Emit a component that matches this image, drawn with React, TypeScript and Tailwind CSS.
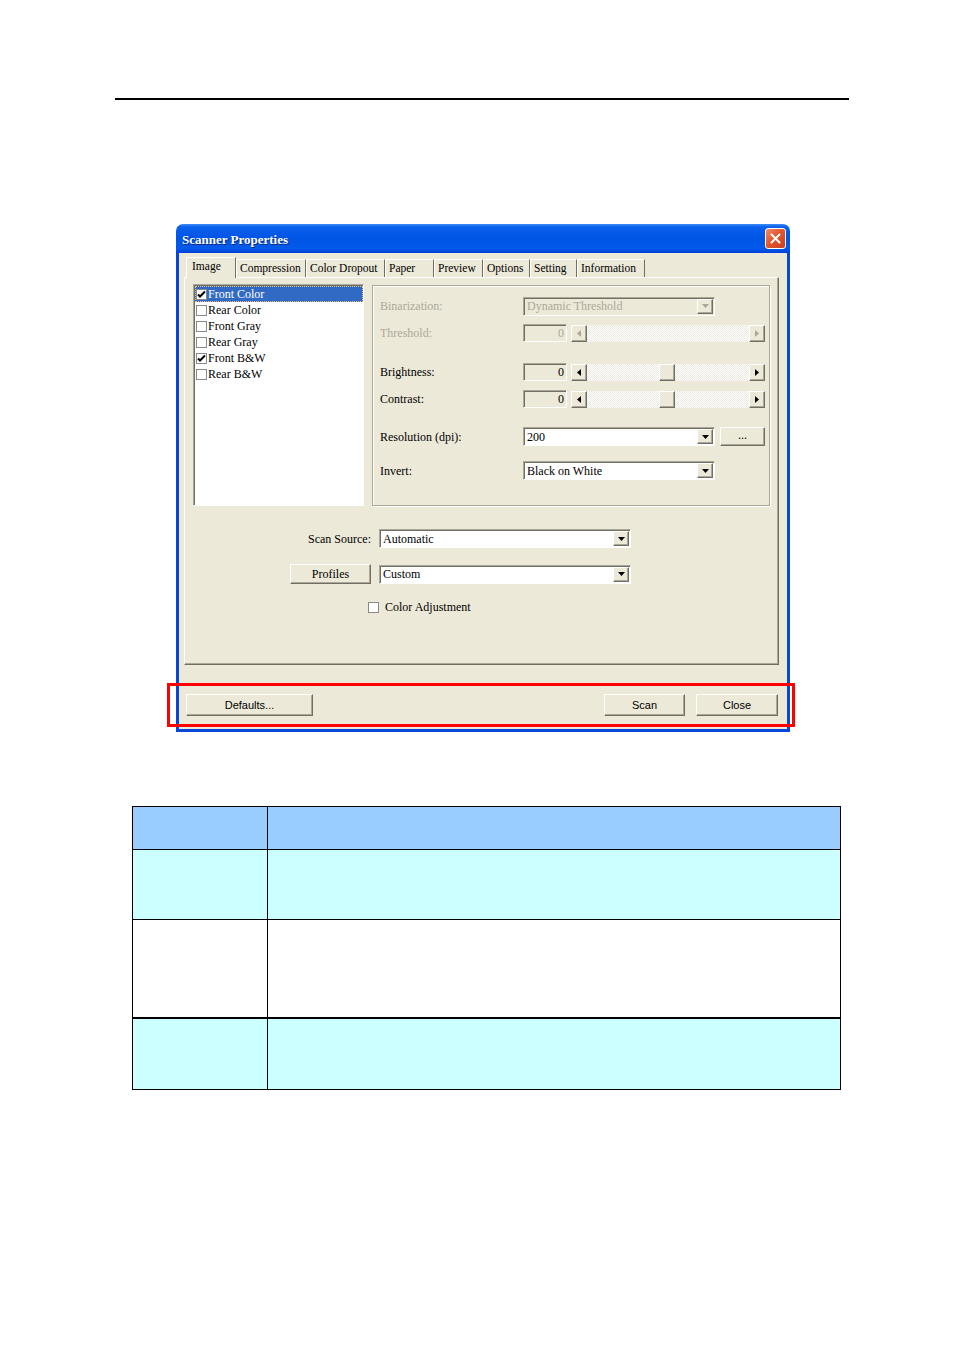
import React from 'react';

const raised =
  'border border-t-white border-l-white border-r-[#716F64] border-b-[#716F64] shadow-[inset_-1px_-1px_0_#ACA899]';
const sunken =
  'border border-t-[#ACA899] border-l-[#ACA899] border-r-white border-b-white shadow-[inset_1px_1px_0_#716F64]';

function Tri({ dir, disabled }: { dir: 'down' | 'left' | 'right'; disabled?: boolean }) {
  const fill = disabled ? '#ACA899' : '#000';
  if (dir === 'down')
    return (
      <svg width="7" height="4" viewBox="0 0 7 4">
        <path d="M0 0h7L3.5 4z" fill={fill} />
      </svg>
    );
  if (dir === 'left')
    return (
      <svg width="4" height="7" viewBox="0 0 4 7">
        <path d="M4 0v7L0 3.5z" fill={fill} />
      </svg>
    );
  return (
    <svg width="4" height="7" viewBox="0 0 4 7">
      <path d="M0 0v7L4 3.5z" fill={fill} />
    </svg>
  );
}

function Combo({ w, value, disabled }: { w: string; value: string; disabled?: boolean }) {
  return (
    <div className={`flex h-[19px] items-center ${w} ${sunken} ${disabled ? 'bg-[#ECE9D8] text-[#ACA899]' : 'bg-white text-black'}`}>
      <span className="flex-1 pl-[3px] leading-none whitespace-nowrap">{value}</span>
      <span className={`mr-[1px] flex h-[15px] w-[16px] items-center justify-center bg-[#ECE9D8] ${raised}`}>
        <Tri dir="down" disabled={disabled} />
      </span>
    </div>
  );
}

function Slider({ disabled, thumb }: { disabled?: boolean; thumb?: boolean }) {
  return (
    <div className="flex h-[17px] w-[194px]">
      <span className={`flex h-full w-[16px] items-center justify-center bg-[#ECE9D8] ${raised}`}>
        <Tri dir="left" disabled={disabled} />
      </span>
      <div className="relative h-full flex-1 bg-[repeating-conic-gradient(#ffffff_0%_25%,#ebe9df_0%_50%)] bg-size-[2px_2px]">
        {thumb && <span className={`absolute top-0 left-[72px] h-full w-[16px] bg-[#ECE9D8] ${raised}`} />}
      </div>
      <span className={`flex h-full w-[16px] items-center justify-center bg-[#ECE9D8] ${raised}`}>
        <Tri dir="right" disabled={disabled} />
      </span>
    </div>
  );
}

function NumBox({ disabled }: { disabled?: boolean }) {
  return (
    <div className={`flex h-[18px] w-[44px] items-center justify-end pr-[2px] bg-[#ECE9D8] ${sunken} ${disabled ? 'text-[#ACA899]' : 'text-black'}`}>
      0
    </div>
  );
}

function Check({ checked }: { checked?: boolean }) {
  return (
    <span className="flex h-[11px] w-[11px] shrink-0 items-center justify-center border border-[#8A8A8A] bg-white">
      {checked && (
        <svg width="9" height="9" viewBox="0 0 9 9">
          <path d="M1 4.5l2 2 5-5" stroke="#000" strokeWidth="2" fill="none" />
        </svg>
      )}
    </span>
  );
}

const tabs = [
  { label: 'Compression', w: 'w-[70px]' },
  { label: 'Color Dropout', w: 'w-[79px]' },
  { label: 'Paper', w: 'w-[49px]' },
  { label: 'Preview', w: 'w-[49px]' },
  { label: 'Options', w: 'w-[47px]' },
  { label: 'Setting', w: 'w-[47px]' },
  { label: 'Information', w: 'w-[68px]' },
];

const items = [
  { label: 'Front Color', checked: true, selected: true },
  { label: 'Rear Color' },
  { label: 'Front Gray' },
  { label: 'Rear Gray' },
  { label: 'Front B&W', checked: true },
  { label: 'Rear B&W' },
];

function Label({ children, disabled }: { children: React.ReactNode; disabled?: boolean }) {
  return <span className={`w-[150px] shrink-0 pl-[7px] ${disabled ? 'text-[#ACA899]' : 'text-black'}`}>{children}</span>;
}

export default function App() {
  return (
    <div className="min-h-[1352px] w-[954px] bg-white font-['Liberation_Serif',serif] text-[12px]">
      <div className="pt-[98px] pl-[115px]">
        <div className="h-[2px] w-[734px] bg-black" />
      </div>

      {/* dialog */}
      <div className="relative mt-[124px] ml-[176px] w-[614px]">
        <div className="flex h-[29px] items-center justify-between rounded-t-[7px] bg-[linear-gradient(180deg,#3D8DF8_0%,#0A60EB_10%,#0055E5_50%,#0259EA_85%,#0040D8_100%)] pr-[4px] pl-[6px]">
          <span className="pt-[3px] font-bold text-[13px] text-white [text-shadow:1px_1px_0_#0A2A7A]">Scanner Properties</span>
          <span className="flex h-[21px] w-[21px] items-center justify-center rounded-[3px] border border-white bg-[linear-gradient(135deg,#F08C6A_0%,#E2572F_45%,#C8401C_100%)]">
            <svg width="11" height="11" viewBox="0 0 11 11">
              <path d="M1.5 1.5l8 8M9.5 1.5l-8 8" stroke="#fff" strokeWidth="2" strokeLinecap="round" />
            </svg>
          </span>
        </div>

        <div className="h-[479px] border-x-[3px] border-b-[3px] border-[#0748D8] bg-[#ECE9D8] pt-[4px] pl-[5px]">
          {/* tabs */}
          <div className="ml-[2px] flex h-[20px] items-end text-[11.5px]">
            <div className="relative z-10 -mb-[1px] flex h-[21px] w-[50px] items-start border-t border-l border-r border-t-white border-l-white border-r-[#716F64] bg-[#ECE9D8] pl-[5px]">
              Image
            </div>
            {tabs.map((t) => (
              <div
                key={t.label}
                className={`flex h-[18px] ${t.w} items-center overflow-hidden border-t border-l border-r border-t-white border-l-white border-r-[#716F64] pl-[3px] whitespace-nowrap`}
              >
                {t.label}
              </div>
            ))}
          </div>

          {/* panel */}
          <div className="h-[388px] w-[595px] border border-t-white border-l-white border-r-[#716F64] border-b-[#716F64] shadow-[inset_-1px_-1px_0_#ACA899]">
            <div className="flex gap-[8px] pt-[6px] pl-[8px]">
              <div className={`h-[222px] w-[171px] bg-white ${sunken} pt-[1px] pl-[1px]`}>
                {items.map((it) => (
                  <div
                    key={it.label}
                    className={`flex h-[16px] items-center gap-[1px] pl-[1px] ${it.selected ? 'bg-[#316AC5] text-white outline-1 outline-dotted outline-offset-[-1px] outline-[#F0C080]' : 'text-black'}`}
                  >
                    <Check checked={it.checked} />
                    <span className="leading-none">{it.label}</span>
                  </div>
                ))}
              </div>

              <div className="mt-[1px] h-[221px] w-[398px] border border-[#ACA899] shadow-[inset_1px_1px_0_#fff,1px_1px_0_#fff]">
                <div className="mt-[11px] flex h-[18px] items-center">
                  <Label disabled>Binarization:</Label>
                  <Combo w="w-[192px]" value="Dynamic Threshold" disabled />
                </div>
                <div className="mt-[9px] flex h-[18px] items-center gap-[4px]">
                  <Label disabled>Threshold:</Label>
                  <span className="-ml-[4px]"><NumBox disabled /></span>
                  <Slider disabled />
                </div>
                <div className="mt-[21px] flex h-[18px] items-center gap-[4px]">
                  <Label>Brightness:</Label>
                  <span className="-ml-[4px]"><NumBox /></span>
                  <Slider thumb />
                </div>
                <div className="mt-[9px] flex h-[18px] items-center gap-[4px]">
                  <Label>Contrast:</Label>
                  <span className="-ml-[4px]"><NumBox /></span>
                  <Slider thumb />
                </div>
                <div className="mt-[19px] flex h-[19px] items-center">
                  <Label>Resolution (dpi):</Label>
                  <Combo w="w-[192px]" value="200" />
                  <span className={`ml-[5px] flex h-[19px] w-[45px] items-center justify-center bg-[#ECE9D8] pb-[3px] ${raised}`}>...</span>
                </div>
                <div className="mt-[15px] flex h-[19px] items-center">
                  <Label>Invert:</Label>
                  <Combo w="w-[192px]" value="Black on White" />
                </div>
              </div>
            </div>

            {/* lower section */}
            <div className="mt-[23px] flex h-[19px] items-center">
              <span className="w-[194px] pr-[8px] text-right">Scan Source:</span>
              <Combo w="w-[252px]" value="Automatic" />
            </div>
            <div className="mt-[16px] flex h-[20px] items-center">
              <span className={`ml-[105px] flex h-[20px] w-[81px] items-center justify-center bg-[#ECE9D8] ${raised}`}>Profiles</span>
              <span className="ml-[8px]">
                <Combo w="w-[252px]" value="Custom" />
              </span>
            </div>
            <div className="mt-[14px] ml-[183px] flex items-center gap-[6px]">
              <Check />
              <span>Color Adjustment</span>
            </div>
          </div>

          {/* buttons */}
          <div className="mt-[29px] flex h-[22px] items-center pr-[9px] pl-[2px] font-['Liberation_Sans',sans-serif] text-[11px]">
            <span className={`flex h-[22px] w-[127px] items-center justify-center bg-[#ECE9D8] ${raised}`}>Defaults...</span>
            <span className="flex-1" />
            <span className={`flex h-[22px] w-[81px] items-center justify-center bg-[#ECE9D8] ${raised}`}>Scan</span>
            <span className={`ml-[11px] flex h-[22px] w-[82px] items-center justify-center bg-[#ECE9D8] ${raised}`}>Close</span>
          </div>
        </div>

        {/* highlight */}
        <div className="absolute top-[459px] left-[-9px] h-[44px] w-[628px] border-[3px] border-[#FF0000]" />
      </div>

      {/* table */}
      <table className="mt-[74px] ml-[132px] w-[709px] border-collapse">
        <tbody>
          <tr className="h-[43px] bg-[#99CCFF]">
            <td className="w-[135px] border border-black" />
            <td className="border border-black" />
          </tr>
          <tr className="h-[70px] bg-[#CCFFFF]">
            <td className="border border-black" />
            <td className="border border-black" />
          </tr>
          <tr className="h-[98px] bg-white">
            <td className="border border-black" />
            <td className="border border-black" />
          </tr>
          <tr className="h-[72px] bg-[#CCFFFF]">
            <td className="border border-black border-t-2" />
            <td className="border border-black border-t-2" />
          </tr>
        </tbody>
      </table>
    </div>
  );
}
